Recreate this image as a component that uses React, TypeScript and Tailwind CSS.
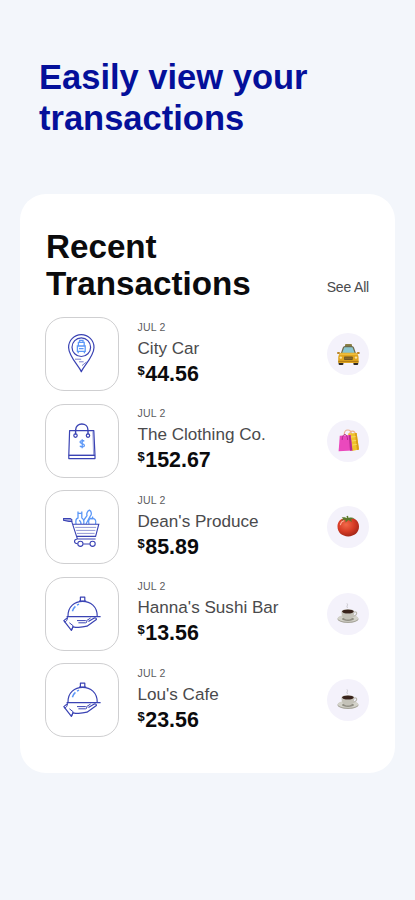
import type { ReactNode } from "react"

const NAVY = "#3a43b4"
const BLUE = "#5b97f7"

/* ── MERCHANT ICONS ── */

function PinIcon() {
  return (
    <svg viewBox="0 0 40 40" className="h-10 w-10" fill="none" stroke={NAVY} strokeWidth="1.2">
      <path d="M19.3 37.8C17.4 32.8 6.6 22 6.6 13.4a12.7 12.7 0 0 1 25.4 0C32 22 21.2 32.8 19.3 37.8Z" strokeLinejoin="round" />
      <circle cx="19.3" cy="13.2" r="9.3" />
      <path d="M13 25.2h6.2M17 27.8h4.6M20 31.6l4.4-3.6" strokeWidth=".9" opacity=".75" />
      <path
        d="M16.4 11.6V8.4h5.800v3.200M17.600 8V6.400H21V8M15.400 12h7.800v5.400h-7.800ZM16.200 17.400v1.800M22.400 17.400v1.800M17 14.600h4.600"
        stroke={BLUE}
        strokeWidth="1.300"
      />
    </svg>
  )
}

function BagIcon() {
  return (
    <svg viewBox="0 0 40 40" className="h-10 w-10" fill="none" stroke={NAVY} strokeWidth="1.2">
      <path d="M7.6 9.6h24.2l1.2 25v3H6.8v-3Z" strokeLinejoin="round" />
      <path d="M6.8 34.3H33" strokeWidth="1.400" />
      <path d="M30.8 10.4 31.6 34" strokeWidth=".7" opacity=".7" />
      <path d="M13.6 13.4V9.2c0-8.2 12.4-8.2 12.4 0v4.2" strokeWidth="1.400" />
      <circle cx="13.5" cy="14.6" r="1.7" />
      <circle cx="26" cy="14.6" r="1.7" />
      <path d="M22.2 20.4c-.8-1.3-4.2-1.2-4.2.7 0 2 4.4 1.2 4.4 3.3 0 2-3.7 2-4.5.4M20.2 18.3v8.9" stroke={BLUE} strokeWidth="1.300" />
    </svg>
  )
}

function CartIcon() {
  return (
    <svg viewBox="0 0 40 40" className="h-10 w-10" fill="none" stroke={NAVY} strokeWidth="1.1">
      <g stroke={BLUE} strokeWidth="1.300" strokeLinejoin="round">
        <path d="M14 17c-.6-4 .4-5.6 2-6V6.4h3.8V11c1.6.8 2.4 2.8 2 6M16 4.4v2M19.8 4.4v2" />
        <path d="M21.6 13.4 25 8.6c-.8-2 .4-4.6 2.4-5.4 2.2 1 2.8 4.4.6 6.4l-4 7.4" />
        <path d="M27 17c-1.4-4.4 1-6.2 3-5.2 2.6-.8 4.6 1.4 3.6 5.2M30 11.6l1-2" />
        <path d="M17 13.4c1.4.4 2 2 2 3.6" />
      </g>
      <path d="M1.6 11.6h6.6l1.6 1v1.8H7l-5.4-1Z" fill={NAVY} fillOpacity=".35" />
      <path d="M9.6 14.2 15.4 32h18.2M11.2 17.2h25.6L33.6 29.4H14.6M15 32c-3.4.6-3.4 4.6.6 4.8M21.2 37h6.7" />
      <path d="M13.2 20.4h21M14.2 23.4h19.2M15 26.4h17.6" strokeWidth="1" opacity=".55" />
      <circle cx="18.4" cy="36.8" r="2.6" />
      <circle cx="30.6" cy="36.8" r="2.6" />
    </svg>
  )
}

function ClocheIcon() {
  return (
    <svg viewBox="0 0 40 40" className="h-10 w-10" fill="none" stroke={NAVY} strokeWidth="1.2" strokeLinejoin="round">
      <path d="M18.4 7V3.2h4.4V7M17 7.2h7.2" />
      <path d="M6 22C6 12.6 12.6 7.4 20.6 7.4S35.2 12.6 35.2 22" />
      <path d="M4.6 22.7h34" strokeWidth="1.3" />
      <path d="M10.4 17.2c.6-2 1.6-3.6 3-4.8M15 11.2l2-1" stroke={BLUE} strokeWidth="1.5" />
      <path d="m5.8 23.4-4 3.2 7.6 9.8 1.6-3.6c4 .8 9.4.6 14-.6l9.4-6.6c.2-1.8-1.6-2-3-1.2l-5 3" />
      <path d="M15 26.6h8.6c1.6 0 1.6 2.2 0 2.2h-7.2M5.6 23.6c-.4 1.8-.8 3.8-3 4.6M24.6 26.6l4-2.6M9.4 36.4l1.800-4.600-3.800-3" strokeWidth="1" />
    </svg>
  )
}

/* ── CATEGORY PICTURES ── */

function TaxiPicture() {
  return (
    <svg viewBox="0 0 42 42" className="h-full w-full">
      <rect x="18" y="11" width="7" height="3" rx="1" fill="#8d8044" />
      <rect x="11.6" y="27" width="4.8" height="5" rx="1" fill="#2e2925" />
      <rect x="26.4" y="27" width="4.8" height="5" rx="1" fill="#2e2925" />
      <path d="M13.8 20.6 15.8 14.6c.4-1.2 1-1.6 2.2-1.7 2.4-.2 4.4-.2 6.8 0 1.2.1 1.8.5 2.2 1.7l2 6Z" fill="#6d6a4a" />
      <path d="m15.2 20 1.6-4.6c.3-.8.6-1 1.4-1.1 2-.2 4.4-.2 6.4 0 .8.1 1.1.3 1.4 1.1l1.6 4.6Z" fill="#8ac5cf" />
      <rect x="10" y="19" width="3" height="2" rx="1" fill="#b9852a" />
      <rect x="29.8" y="19" width="3" height="2" rx="1" fill="#b9852a" />
      <path d="M13.6 19.8h15.6c1.6 1.4 2.4 3 2.4 5V29c0 .6-.4 1-1 1H12.2c-.6 0-1-.4-1-1v-4.2c0-2 .8-3.6 2.4-5Z" fill="#dfa51f" />
      <path d="M13.2 20.6h16.4l.6 1.2H12.6Z" fill="#f3c647" />
      <rect x="17" y="23.4" width="8.8" height="3.6" rx=".8" fill="#6f5625" />
      <path d="M17.6 25.2h7.6" stroke="#a98536" strokeWidth=".6" />
      <circle cx="13.8" cy="24.6" r="1.2" fill="#fbe3a0" />
      <circle cx="29" cy="24.6" r="1.2" fill="#fbe3a0" />
      <path d="M11.4 28.4h20" stroke="#a87413" strokeWidth=".9" />
    </svg>
  )
}

function ShoppingPicture() {
  return (
    <svg viewBox="0 0 42 42" className="h-full w-full">
      <path d="M17.2 15c0-6.6 7-6.6 7.4 0M22.6 14.6c.2-4.6 5.4-4.6 5.8-.4" fill="none" stroke="#ecb191" strokeWidth="1.1" />
      <path d="M21 13.6 29.6 13l2.4 16.6-7 1.4Z" fill="#efc22c" />
      <path d="m28 13.2 1.6-.2L32 29.6l-2 .4Z" fill="#d99d17" />
      <path d="m23.8 17 4.8-.4M24.6 21l4.6-.6M25.4 25l4.4-.6" stroke="#f8dc66" strokeWidth=".9" />
      <path d="M12.8 15.8 23.6 15l1.8 15.6-13.8.6Z" fill="#ea49bd" />
      <path d="m21.8 15.2 1.8-.2 1.8 15.6-2.4.1Z" fill="#b52b91" />
      <path d="M15.2 20c0-7.4 5.4-7.4 5.4 0" fill="none" stroke="#a92c88" strokeWidth=".9" />
    </svg>
  )
}

function TomatoPicture() {
  return (
    <svg viewBox="0 0 42 42" className="h-full w-full">
      <defs>
        <radialGradient id="tomato" cx=".4" cy=".35" r=".7">
          <stop offset="0" stopColor="#f2694a" />
          <stop offset=".55" stopColor="#d63b25" />
          <stop offset="1" stopColor="#9e2416" />
        </radialGradient>
      </defs>
      <path d="M21 12.6c6.4-1.6 11 2.2 11 8 0 6-4.6 9.8-10.8 9.8S10.5 26.6 10.5 20.6c0-5.8 4.5-9.4 10.5-8Z" fill="url(#tomato)" />
      <path d="M13.4 18.6c.4-2 1.6-3.2 3.4-3.8" fill="none" stroke="#ffb09a" strokeWidth="1.1" strokeLinecap="round" />
      <path d="M14.6 11.6c2.2-1 4 0 5.4.6l-.6-2 1.6-.4.6 2.2c2-.8 4-.6 6 .6-1.8.2-2.8.4-3.6 1l1 2.4-3.6-2-2.8 2.6-.2-2.8c-1.4 0-2.4.2-3.6 1 .4-1.4 1-2 1.6-2.4Z" fill="#5a7a2b" />
    </svg>
  )
}

function CoffeePicture() {
  return (
    <svg viewBox="0 0 42 42" className="h-full w-full">
      <path d="M20.6 15c-2-1.8 1.2-2.4-.6-4.6" fill="none" stroke="#c9c8ce" strokeWidth="1" />
      <ellipse cx="21" cy="26" rx="10.6" ry="4" fill="#a6a499" />
      <ellipse cx="21" cy="25.2" rx="10.4" ry="3.5" fill="#d3d2c9" />
      <ellipse cx="21" cy="26" rx="6" ry="1.9" fill="#918f84" />
      <path d="M26.6 19c4-1.2 4.6 3.6-1.4 4.4" fill="none" stroke="#bab8ae" strokeWidth="1.2" />
      <path d="M14.4 18.4h13c0 4.800-2.200 8.200-6.500 8.200s-6.500-3.400-6.500-8.200Z" fill="#c4c2b8" />
      <ellipse cx="20.9" cy="18.4" rx="6.5" ry="2.4" fill="#dddcd5" />
      <ellipse cx="20.9" cy="18.5" rx="5.9" ry="2" fill="#38231b" />
    </svg>
  )
}

type Transaction = {
  name: string
  amount: string
  icon: ReactNode
  picture: ReactNode
}

const TRANSACTIONS: Transaction[] = [
  { name: "City Car", amount: "44.56", icon: <PinIcon />, picture: <TaxiPicture /> },
  { name: "The Clothing Co.", amount: "152.67", icon: <BagIcon />, picture: <ShoppingPicture /> },
  { name: "Dean's Produce", amount: "85.89", icon: <CartIcon />, picture: <TomatoPicture /> },
  { name: "Hanna's Sushi Bar", amount: "13.56", icon: <ClocheIcon />, picture: <CoffeePicture /> },
  { name: "Lou's Cafe", amount: "23.56", icon: <ClocheIcon />, picture: <CoffeePicture /> },
]

function TransactionRow({ name, amount, icon, picture }: Transaction) {
  return (
    <li className="flex h-[74px] items-center">
      <div className="flex h-[74px] w-[74px] shrink-0 items-center justify-center rounded-[19px] border border-[#cfcfd1]">
        {icon}
      </div>
      <div className="ml-[18.5px] flex-1 whitespace-nowrap pb-[2px]">
        <p className="text-[10.5px] leading-[14px] tracking-[0.2px] text-[#5c5c5e]">JUL 2</p>
        <p className="mt-[3px] text-[17.1px] leading-[24px] text-[#4a4a4c]">{name}</p>
        <p className="flex items-start text-[21.4px] font-bold leading-[26px] text-[#0b0b0d]">
          <span className="mr-[0.6px] text-[13px] leading-[19px]">$</span>
          {amount}
        </p>
      </div>
      <div className="h-[42px] w-[42px] shrink-0 rounded-full bg-[#f4f2fb]">{picture}</div>
    </li>
  )
}

export default function App() {
  return (
    <main className="h-[900px] w-full overflow-hidden bg-[#f3f6fb] px-5 pt-[57px] font-['Liberation_Sans',Arial,sans-serif]">
      <h1 className="ml-[19px] text-[34.5px] font-bold leading-[41px] text-[#04109a]">
        Easily view your
        <br />
        transactions
      </h1>

      <section className="mt-[55px] h-[579px] rounded-[26px] bg-white pl-[25px] pr-[26px] pt-[34px]">
        <header className="flex items-end justify-between">
          <h2 className="ml-px text-[33.2px] font-bold leading-[37px] text-[#0b0b0d]">
            Recent
            <br />
            Transactions
          </h2>
          <a href="#" className="mb-[7px] text-[14px] leading-4 tracking-[-0.18px] text-[#4a4a4c]">
            See All
          </a>
        </header>

        <ul className="mt-[15px] flex flex-col gap-[12.5px]">
          {TRANSACTIONS.map((transaction) => (
            <TransactionRow key={transaction.name} {...transaction} />
          ))}
        </ul>
      </section>
    </main>
  )
}
